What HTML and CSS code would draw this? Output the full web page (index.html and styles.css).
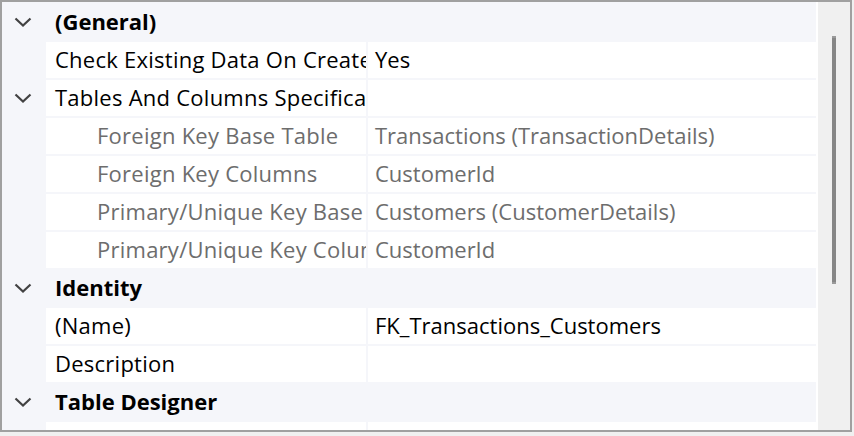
FILE: index.html
```html
<!DOCTYPE html>
<html>
<head>
<meta charset="utf-8">
<link rel="stylesheet" href="styles.css">
</head>
<body>
<div class="frame">
  <div class="grid">
    <div class="rows">
      <div class="row cat">
        <span class="gutter"><svg class="chev" width="18" height="10" viewBox="0 0 18 10"><polyline points="1.5,1.5 9,8.5 16.5,1.5"/></svg></span>
        <span class="cat-label">(General)</span>
      </div>
      <div class="row prop">
        <span class="gutter"></span>
        <span class="name">Check Existing Data On Create Or Re-Enabling</span>
        <span class="value">Yes</span>
      </div>
      <div class="row prop">
        <span class="gutter"><svg class="chev" width="18" height="10" viewBox="0 0 18 10"><polyline points="1.5,1.5 9,8.5 16.5,1.5"/></svg></span>
        <span class="name">Tables And Columns Specification</span>
        <span class="value"></span>
      </div>
      <div class="row prop ro">
        <span class="gutter"></span>
        <span class="name sub">Foreign Key Base Table</span>
        <span class="value">Transactions (TransactionDetails)</span>
      </div>
      <div class="row prop ro">
        <span class="gutter"></span>
        <span class="name sub">Foreign Key Columns</span>
        <span class="value">CustomerId</span>
      </div>
      <div class="row prop ro">
        <span class="gutter"></span>
        <span class="name sub">Primary/Unique Key Base Table</span>
        <span class="value">Customers (CustomerDetails)</span>
      </div>
      <div class="row prop ro">
        <span class="gutter"></span>
        <span class="name sub">Primary/Unique Key Columns</span>
        <span class="value">CustomerId</span>
      </div>
      <div class="row cat">
        <span class="gutter"><svg class="chev" width="18" height="10" viewBox="0 0 18 10"><polyline points="1.5,1.5 9,8.5 16.5,1.5"/></svg></span>
        <span class="cat-label">Identity</span>
      </div>
      <div class="row prop">
        <span class="gutter"></span>
        <span class="name">(Name)</span>
        <span class="value">FK_Transactions_Customers</span>
      </div>
      <div class="row prop">
        <span class="gutter"></span>
        <span class="name">Description</span>
        <span class="value"></span>
      </div>
      <div class="row cat">
        <span class="gutter"><svg class="chev" width="18" height="10" viewBox="0 0 18 10"><polyline points="1.5,1.5 9,8.5 16.5,1.5"/></svg></span>
        <span class="cat-label">Table Designer</span>
      </div>
      <div class="row prop">
        <span class="gutter"></span>
        <span class="name">Enforce For Replication</span>
        <span class="value">Yes</span>
      </div>
    </div>
  </div>
  <div class="scrollbar"><div class="thumb"></div></div>
</div>
</body>
</html>
```

FILE: styles.css
```css
html, body {
  margin: 0;
  padding: 0;
  background: #f0f0f0;
}

body {
  width: 854px;
  height: 436px;
  overflow: hidden;
  font-family: "Open Sans", "Noto Sans", sans-serif;
  font-size: 22px;
  color: #000;
}

.frame {
  width: 848px;
  height: 428px;
  border: 2px solid #a0a0a0;
  display: flex;
  background: #fff;
}

.grid {
  width: 816px;
  height: 428px;
  background: #fff;
  overflow: hidden;
}

.rows {
  width: 814px;
  background: #f5f6fa;
  padding-top: 2px;
  display: flex;
  flex-direction: column;
  gap: 2px;
}

.row {
  height: 36px;
  display: flex;
  align-items: stretch;
  line-height: 35px;
  white-space: nowrap;
}

.gutter {
  width: 44px;
  flex: none;
  display: flex;
  align-items: center;
  padding-left: 12px;
  box-sizing: border-box;
}

.chev {
  display: block;
  margin-top: -1px;
}

.chev polyline {
  fill: none;
  stroke: #424242;
  stroke-width: 2.2;
}

.cat-label {
  padding-left: 9px;
  font-weight: 700;
}

.name {
  width: 320px;
  flex: none;
  background: #fff;
  padding-left: 9px;
  box-sizing: border-box;
  overflow: hidden;
  margin-right: 2px;
  letter-spacing: 0.25px;
}

.name.sub {
  padding-left: 51px;
}

.value {
  flex: 1;
  background: #fff;
  padding-left: 7px;
  overflow: hidden;
}

.ro .name,
.ro .value {
  color: #6d6d6d;
}

.scrollbar {
  width: 32px;
  flex: none;
  background: #f0f0f0;
  padding-left: 14px;
  box-sizing: border-box;
}

.thumb {
  width: 4px;
  height: 248px;
  margin-top: 34px;
  background: #868686;
  border-top: 2px solid #9a9a9a;
  border-bottom: 2px solid #9a9a9a;
  box-sizing: border-box;
}
```
